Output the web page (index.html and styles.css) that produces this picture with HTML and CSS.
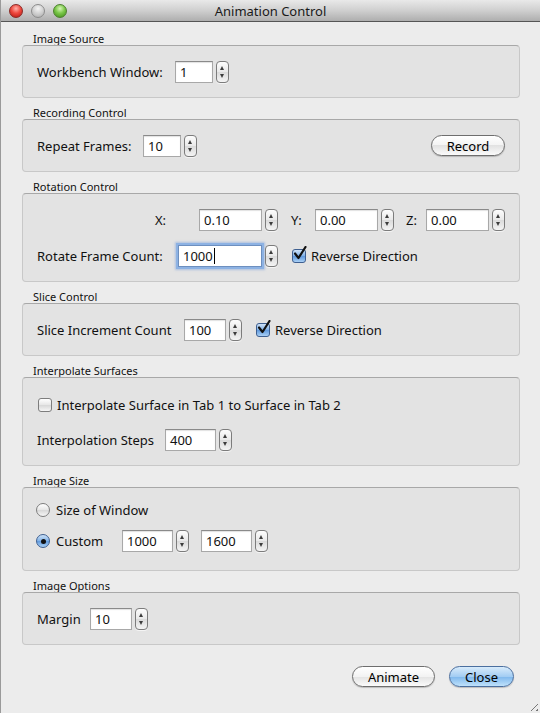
FILE: index.html
```html
<!DOCTYPE html>
<html>
<head>
<meta charset="utf-8">
<link rel="stylesheet" href="styles.css">
</head>
<body>
<div class="window">
  <div class="titlebar">
    <div class="lights">
      <span class="light red"></span>
      <span class="light gray"></span>
      <span class="light green"></span>
    </div>
    <div class="title">Animation Control</div>
  </div>

  <div class="content">
    <section class="group">
      <div class="glabel">Image Source</div>
      <div class="gbox box-src">
        <div class="row">
          <span class="lbl w-wb">Workbench Window:</span>
          <span class="field w38">1</span><span class="spin"></span>
        </div>
      </div>
    </section>

    <section class="group">
      <div class="glabel">Recording Control</div>
      <div class="gbox box-rec">
        <div class="row">
          <span class="lbl w-rf">Repeat Frames:</span>
          <span class="field w38">10</span><span class="spin"></span>
          <span class="grow"></span>
          <span class="btn btn-record">Record</span>
        </div>
      </div>
    </section>

    <section class="group">
      <div class="glabel">Rotation Control</div>
      <div class="gbox box-rot">
        <div class="row">
          <span class="lbl w-x">X:</span>
          <span class="field w63">0.10</span><span class="spin"></span>
          <span class="lbl w-y">Y:</span>
          <span class="field w63">0.00</span><span class="spin"></span>
          <span class="lbl w-z">Z:</span>
          <span class="field w63">0.00</span><span class="spin"></span>
        </div>
        <div class="row">
          <span class="lbl w-rfc">Rotate Frame Count:</span>
          <span class="field w84 focus">1000<span class="caret"></span></span><span class="spin"></span>
          <span class="check checked ml14"><svg width="16" height="16" viewBox="0 0 16 16"><path d="M3 7.5 L6.5 12 L13.5 1" fill="none" stroke="#111" stroke-width="2.2" stroke-linecap="round" stroke-linejoin="round"/></svg></span>
          <span class="ctext">Reverse Direction</span>
        </div>
      </div>
    </section>

    <section class="group">
      <div class="glabel">Slice Control</div>
      <div class="gbox box-slice">
        <div class="row">
          <span class="lbl w-sic">Slice Increment Count</span>
          <span class="field w42">100</span><span class="spin"></span>
          <span class="check checked ml14"><svg width="16" height="16" viewBox="0 0 16 16"><path d="M3 7.5 L6.5 12 L13.5 1" fill="none" stroke="#111" stroke-width="2.2" stroke-linecap="round" stroke-linejoin="round"/></svg></span>
          <span class="ctext">Reverse Direction</span>
        </div>
      </div>
    </section>

    <section class="group">
      <div class="glabel">Interpolate Surfaces</div>
      <div class="gbox box-interp">
        <div class="row">
          <span class="check ml1"></span>
          <span class="ctext">Interpolate Surface in Tab 1 to Surface in Tab 2</span>
        </div>
        <div class="row">
          <span class="lbl w-is">Interpolation Steps</span>
          <span class="field w51">400</span><span class="spin"></span>
        </div>
      </div>
    </section>

    <section class="group">
      <div class="glabel">Image Size</div>
      <div class="gbox box-size">
        <div class="row">
          <span class="radio"></span>
          <span class="rtext">Size of Window</span>
        </div>
        <div class="row">
          <span class="radio on"></span>
          <span class="rtext w-custom">Custom</span>
          <span class="field w51">1000</span><span class="spin"></span>
          <span class="field w51 ml12">1600</span><span class="spin"></span>
        </div>
      </div>
    </section>

    <section class="group">
      <div class="glabel">Image Options</div>
      <div class="gbox box-opt">
        <div class="row">
          <span class="lbl w-margin">Margin</span>
          <span class="field w42">10</span><span class="spin"></span>
        </div>
      </div>
    </section>

    <div class="actions">
      <span class="btn btn-animate">Animate</span>
      <span class="btn btn-close">Close</span>
    </div>
  </div>
  <div class="grip"></div>
</div>
</body>
</html>
```

FILE: styles.css
```css
* { box-sizing: border-box; }
html, body { margin: 0; padding: 0; }
body {
  width: 540px;
  height: 713px;
  overflow: hidden;
  background: #ececec;
  font-family: "Noto Sans", "DejaVu Sans", sans-serif;
  font-size: 13px;
  color: #111;
}
.window {
  position: relative;
  width: 540px;
  height: 713px;
  background: #ececec;
  border-left: 1px solid #9a9a9a;
}
.titlebar {
  position: relative;
  height: 22px;
  background: linear-gradient(#e9e9e9, #cfcfcf 50%, #aeaeae);
  border-bottom: 1px solid #555;
  display: flex;
  align-items: center;
  justify-content: center;
}
.lights {
  position: absolute;
  left: 8px;
  top: 4px;
  display: flex;
  gap: 8px;
}
.light {
  width: 14px;
  height: 14px;
  border-radius: 50%;
  display: block;
}
.light.red {
  background: radial-gradient(circle at 50% 30%, #ffb0a8 0, #ef4a40 45%, #b3140e 100%);
  border: 1px solid #8a2a26;
}
.light.gray {
  background: radial-gradient(circle at 50% 30%, #f4f4f4 0, #d0d0d0 50%, #a9a9a9 100%);
  border: 1px solid #8c8c8c;
}
.light.green {
  background: radial-gradient(circle at 50% 30%, #d8f5b8 0, #7bc84a 45%, #3f8a17 100%);
  border: 1px solid #4c7f2e;
}
.title {
  font-size: 13px;
  color: #1a1a1a;
  line-height: 22px;
}
.content {
  padding: 11px 20px 0 21px;
  display: flex;
  flex-direction: column;
}
.group { display: flex; flex-direction: column; margin-bottom: 9px; }
.glabel {
  font-size: 11px;
  line-height: 12px;
  height: 12px;
  padding-left: 11px;
  color: #111;
}
.gbox {
  background: #e3e3e3;
  border: 1px solid #c8c8c8;
  border-top-color: #a8a8a8;
  border-radius: 4px;
  padding: 0 14px;
  display: flex;
  flex-direction: column;
  justify-content: center;
}
.box-src { height: 53px; }
.box-rec { height: 53px; }
.box-rot { height: 89px; gap: 14px; justify-content: flex-start; padding-top: 15px; }
.box-slice { height: 53px; }
.box-interp { height: 89px; gap: 13px; justify-content: flex-start; padding-top: 16px; }
.box-size { height: 84px; gap: 9px; justify-content: flex-start; padding-top: 11px; }
.box-opt { height: 53px; }

.row {
  display: flex;
  align-items: center;
  height: 22px;
  flex: none;
  white-space: nowrap;
}
.grow { flex: 1; }
.lbl { display: inline-block; flex: none; }
.w-wb { width: 138px; }
.w-rf { width: 106px; }
.w-x { width: 162px; text-align: right; padding-right: 33px; }
.w-y { width: 37px; padding-left: 13px; }
.w-z { width: 32px; padding-left: 12px; }
.w-rfc { width: 141px; }
.w-sic { width: 147px; }
.w-is { width: 128px; }
.w-margin { width: 53px; }
.w-custom { width: 66px; }

.field {
  display: inline-flex;
  align-items: center;
  height: 22px;
  background: #fff;
  border: 1px solid #a8a8a8;
  border-top-color: #8a8a8a;
  box-shadow: inset 0 1px 1px rgba(0,0,0,0.12);
  padding-left: 4px;
  font-size: 13px;
  flex: none;
  position: relative;
}
.w38 { width: 38px; }
.w42 { width: 42px; }
.w51 { width: 51px; }
.w63 { width: 63px; }
.w84 { width: 84px; }
.ml12 { margin-left: 12px; }
.ml14 { margin-left: 14px; }
.ml1 { margin-left: 1px; }
.focus {
  border-color: #6d8fbf;
  box-shadow: 0 0 0 2px #8db2e3, 0 0 2px 3px rgba(120,160,220,0.5);
}
.caret {
  display: inline-block;
  width: 1px;
  height: 16px;
  background: #000;
  margin-left: 1px;
}
.spin {
  position: relative;
  display: inline-block;
  flex: none;
  width: 13px;
  height: 22px;
  margin-left: 3px;
  border: 1px solid #7c7c7c;
  border-radius: 4px;
  background: linear-gradient(#fdfdfd, #e9e9e9 50%, #dadada 50%, #f4f4f4);
  box-shadow: 0 1px 0 rgba(255,255,255,0.6);
}
.spin::before, .spin::after {
  content: "";
  position: absolute;
  left: 3px;
  width: 0;
  height: 0;
  border-left: 2.5px solid transparent;
  border-right: 2.5px solid transparent;
}
.spin::before { top: 4px; border-bottom: 4px solid #3c3c3c; }
.spin::after { bottom: 4px; border-top: 4px solid #3c3c3c; }

.check {
  position: relative;
  display: inline-block;
  flex: none;
  width: 14px;
  height: 14px;
  border: 1px solid #7d7d7d;
  border-radius: 3px;
  background: linear-gradient(#ffffff, #e6e6e6 50%, #d6d6d6 50%, #f6f6f6);
}
.check.checked {
  border-color: #3e5f90;
  background: linear-gradient(#cfe3f8, #7fb0e6 50%, #5d97dc 50%, #a9d0f5);
}
.check svg {
  position: absolute;
  left: -1px;
  top: -4px;
}
.ctext { margin-left: 5px; }

.radio {
  display: inline-block;
  flex: none;
  width: 14px;
  height: 14px;
  margin-left: -1px;
  border-radius: 50%;
  border: 1px solid #7d7d7d;
  background: linear-gradient(#ffffff, #e6e6e6 50%, #d6d6d6 50%, #f6f6f6);
  position: relative;
}
.radio.on {
  border-color: #3e5f90;
  background: linear-gradient(#cfe3f8, #7fb0e6 50%, #5d97dc 50%, #a9d0f5);
}
.radio.on::after {
  content: "";
  position: absolute;
  left: 3.5px;
  top: 3.5px;
  width: 5px;
  height: 5px;
  border-radius: 50%;
  background: #111;
}
.rtext { margin-left: 6px; display: inline-block; }

.btn {
  display: inline-flex;
  align-items: center;
  justify-content: center;
  height: 21px;
  border-radius: 11px;
  border: 1px solid #6e6e6e;
  background: linear-gradient(#ffffff, #f3f3f3 50%, #e2e2e2 50%, #fbfbfb);
  box-shadow: 0 1px 1px rgba(0,0,0,0.2);
  font-size: 13px;
  color: #000;
  flex: none;
}
.btn-record { width: 74px; margin-right: 0; }
.actions {
  display: flex;
  justify-content: flex-end;
  gap: 14px;
  margin-top: 12px;
  padding-right: 6px;
}
.btn-animate { width: 83px; }
.btn-close {
  width: 65px;
  border-color: #4b6f9f;
  background: linear-gradient(#d8ebfb, #a3cdf3 50%, #7cb6ec 50%, #bfe1fb);
}
.grip {
  position: absolute;
  right: 2px;
  bottom: 2px;
  width: 11px;
  height: 11px;
  background: repeating-linear-gradient(135deg, transparent 0 2px, #777 2px 3px, transparent 3px 4px);
  clip-path: polygon(100% 0, 100% 100%, 0 100%);
}
```
